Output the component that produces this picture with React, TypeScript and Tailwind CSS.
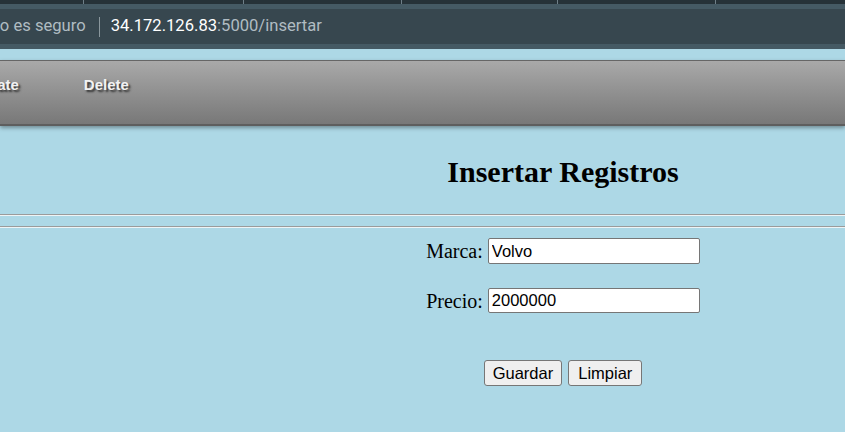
import React from 'react';

const tabEdges = [84, 160, 158, 156, 158];

export default function App() {
  return (
    <div className="w-[845px] h-[432px] overflow-hidden bg-[#add8e6]">
      {/* browser chrome */}
      <div className="bg-[#37474f]">
        <div className="h-[4px] bg-[#263238] flex">
          {tabEdges.map((w, i) => (
            <div key={i} className="h-full border-r border-[#6f7f88]" style={{ width: w }} />
          ))}
        </div>
        <div className="h-[5px] bg-[#455a64]" />
        <div className="h-[35px] flex items-center text-[16.6px] font-['Roboto',sans-serif] whitespace-nowrap">
          <span className="ml-[-12px] text-[#b0bcc2]">No es seguro</span>
          <span className="ml-[13px] w-px h-[20px] bg-[#8a979d]" />
          <span className="ml-[11px] text-white">34.172.126.83</span>
          <span className="text-[#b0bcc2]">:5000/insertar</span>
        </div>
        <div className="h-[5px] bg-[#455a64]" />
      </div>

      {/* menu bar */}
      <nav className="mt-[11px] h-[66px] border-t border-[#666] border-b-2 border-b-[#5e5e5e] bg-gradient-to-b from-[#a9a9a9] to-[#787878] shadow-[0_2px_4px_rgba(0,0,0,0.35)]">
        <ul className="flex gap-[65px] pt-[15px] font-['Liberation_Sans',Arial,sans-serif] font-bold text-[15px] leading-[18px] text-[#f2f2f2] [text-shadow:2px_2px_2px_#333]">
          <li className="ml-[-32px]">Update</li>
          <li>Delete</li>
        </ul>
      </nav>

      <div className="pl-[281px] text-center text-black font-['Liberation_Serif','Times_New_Roman',serif]">
        <h2 className="mt-[28px] text-[30px] leading-[36px] font-bold">Insertar Registros</h2>
      </div>

      <hr className="mt-[24px] border-0 border-t border-t-[#9b9b9b] border-b border-b-[#eef4f6]" />
      <hr className="mt-[10px] border-0 border-t border-t-[#9b9b9b] border-b border-b-[#eef4f6]" />

      <form className="pl-[281px] font-['Liberation_Serif','Times_New_Roman',serif] text-[20px]">
        <div className="mt-[10px] flex justify-center items-center gap-[5px]">
          <label className="leading-[22px]">Marca:</label>
          <input
            defaultValue="Volvo"
            className="w-[212px] h-[26px] px-[3px] bg-white border border-[#767676] rounded-[2px] text-[16.5px] font-['Liberation_Sans',Arial,sans-serif] outline-none"
          />
        </div>
        <div className="mt-[24px] flex justify-center items-center gap-[5px]">
          <label className="leading-[22px]">Precio:</label>
          <input
            defaultValue="2000000"
            className="w-[212px] h-[25px] px-[3px] bg-white border border-[#767676] rounded-[2px] text-[16.5px] font-['Liberation_Sans',Arial,sans-serif] outline-none"
          />
        </div>
        <div className="mt-[47px] flex justify-center gap-[6px] font-['Liberation_Sans',Arial,sans-serif] text-[16.5px]">
          <button type="button" className="h-[26px] px-[8px] bg-[#efefef] border border-[#767676] rounded-[3px] leading-none">
            Guardar
          </button>
          <button type="button" className="h-[26px] px-[9px] bg-[#efefef] border border-[#767676] rounded-[3px] leading-none">
            Limpiar
          </button>
        </div>
      </form>
    </div>
  );
}
